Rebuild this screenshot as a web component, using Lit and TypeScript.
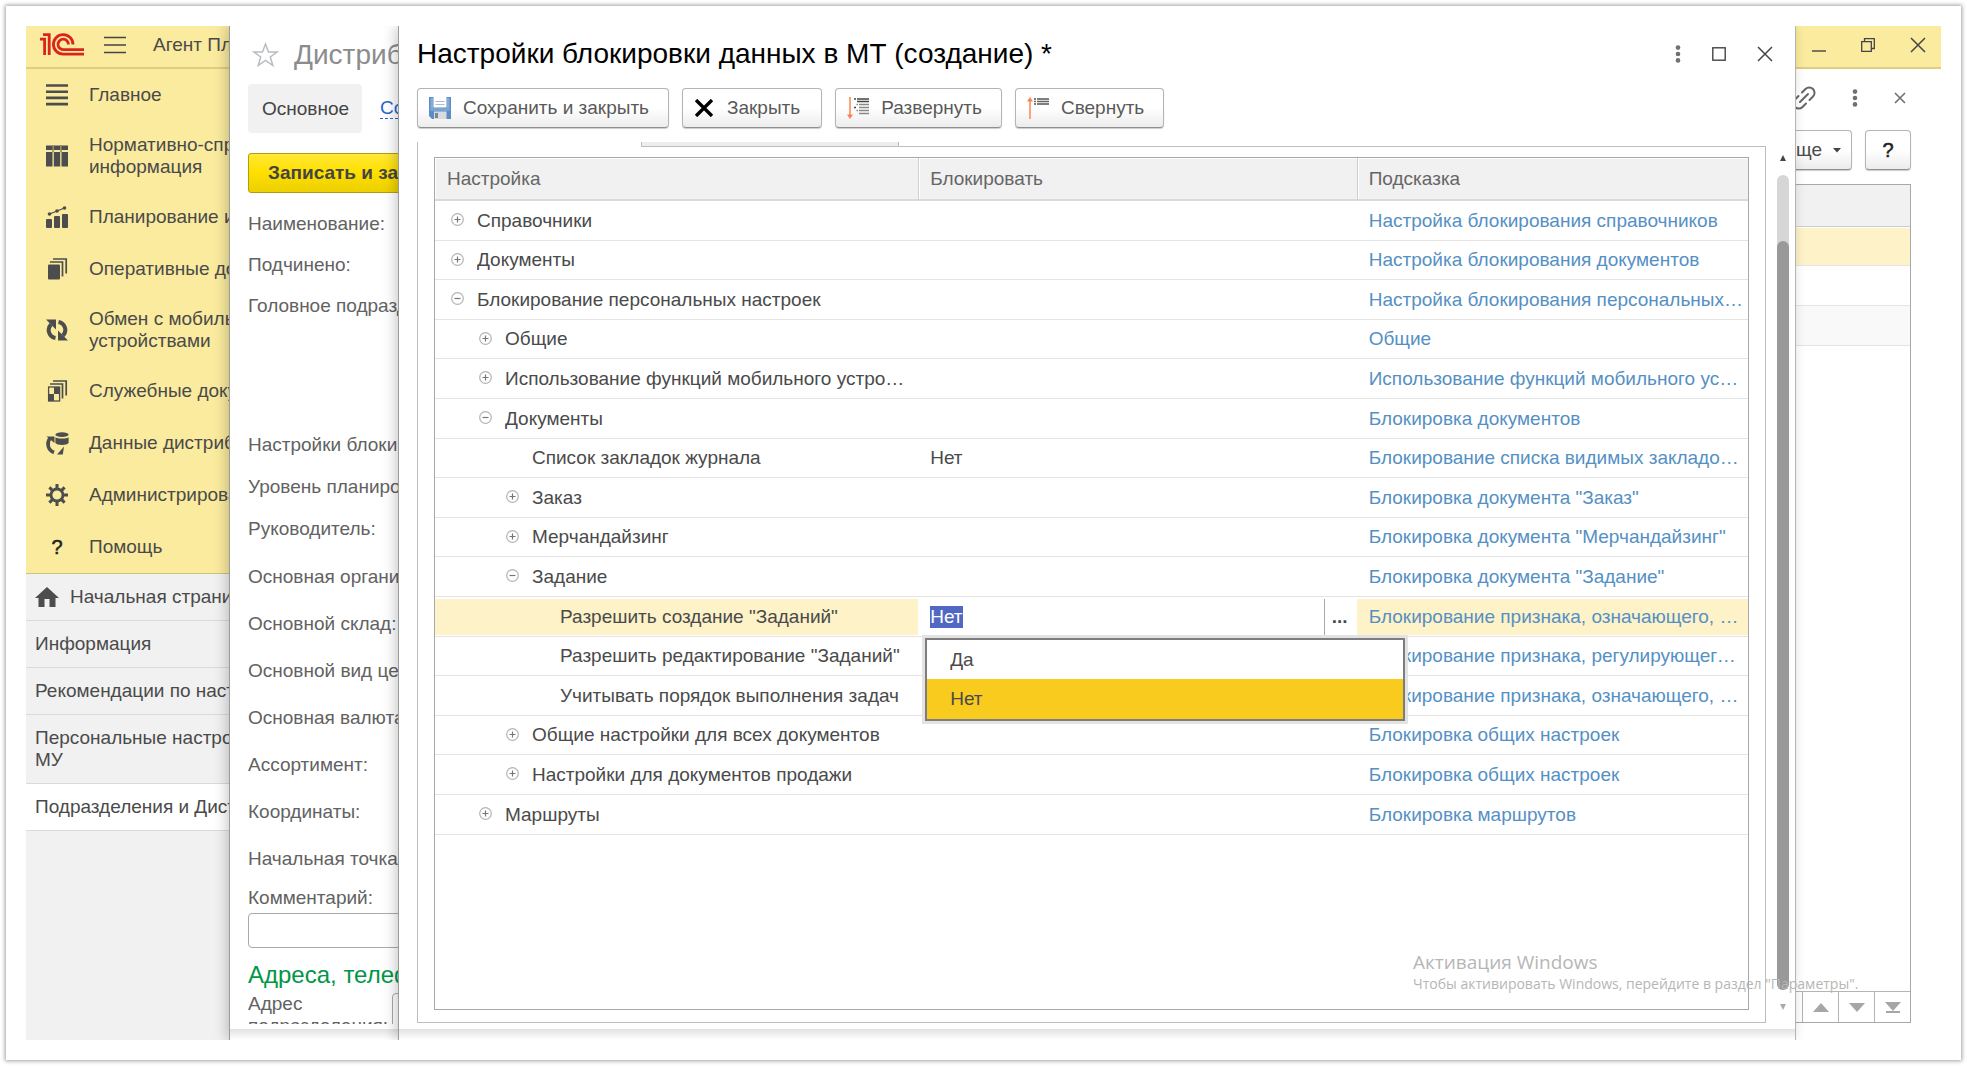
import { LitElement, html, css, svg, nothing } from "lit";
import { customElement, query, state } from "lit/decorators.js";
import { classMap } from "lit/directives/class-map.js";

interface Row {
  level: number;
  mark?: "+" | "-";
  name: string;
  value?: string;
  hint: string;
  editing?: boolean;
}

const ROWS: Row[] = [
  { level: 0, mark: "+", name: "Справочники", hint: "Настройка блокирования справочников" },
  { level: 0, mark: "+", name: "Документы", hint: "Настройка блокирования документов" },
  { level: 0, mark: "-", name: "Блокирование персональных настроек", hint: "Настройка блокирования персональных настроек" },
  { level: 1, mark: "+", name: "Общие", hint: "Общие" },
  { level: 1, mark: "+", name: "Использование функций мобильного устройства", hint: "Использование функций мобильного устройства" },
  { level: 1, mark: "-", name: "Документы", hint: "Блокировка документов" },
  { level: 2, name: "Список закладок журнала", value: "Нет", hint: "Блокирование списка видимых закладок журнала" },
  { level: 2, mark: "+", name: "Заказ", hint: 'Блокировка документа "Заказ"' },
  { level: 2, mark: "+", name: "Мерчандайзинг", hint: 'Блокировка документа "Мерчандайзинг"' },
  { level: 2, mark: "-", name: "Задание", hint: 'Блокировка документа "Задание"' },
  { level: 3, name: 'Разрешить создание "Заданий"', editing: true, hint: "Блокирование признака, означающего, разрешение" },
  { level: 3, name: 'Разрешить редактирование "Заданий"', hint: "Блокирование признака, регулирующего разрешение" },
  { level: 3, name: "Учитывать порядок выполнения задач", hint: "Блокирование признака, означающего, порядок" },
  { level: 2, mark: "+", name: "Общие настройки для всех документов", hint: "Блокировка общих настроек" },
  { level: 2, mark: "+", name: "Настройки для документов продажи", hint: "Блокировка общих настроек" },
  { level: 1, mark: "+", name: "Маршруты", hint: "Блокировка маршрутов" },
];

const icon = (w: number, h: number, body: unknown) =>
  html`<svg width=${w} height=${h} viewBox="0 0 ${w} ${h}" fill="none" aria-hidden="true">${body}</svg>`;

const logo = icon(44, 23, svg`<g stroke="#d9251d" stroke-width="2.8">
  <path d="M0 6.2H4.6V22"/><path d="M3 1.6H9.2V22"/>
  <path d="M33 11.5A9.8 9.8 0 1 0 23.2 21.2H44"/><path d="M28.4 11.5A5.2 5.2 0 1 0 23.2 16.6H44"/></g>`);

const dots = icon(6, 18, svg`<g fill="#707070"><circle cx="3" cy="2.6" r="2.3"/><circle cx="3" cy="9" r="2.3"/><circle cx="3" cy="15.4" r="2.3"/></g>`);
const cross = (s: number, w: number, color = "#444") =>
  icon(s, s, svg`<path d="M1 1L${s - 1} ${s - 1}M${s - 1} 1L1 ${s - 1}" stroke=${color} stroke-width=${w}/>`);

const G = "#4d4d4d";
const MENU: { label: unknown; art: unknown }[] = [
  { label: "Главное", art: icon(22, 22, svg`<path d="M0 1.5H22M0 7.7H22M0 13.9H22M0 20.1H22" stroke=${G} stroke-width="2.6"/>`) },
  { label: html`Нормативно-справочная<br>информация`, art: icon(22, 22, svg`<g fill=${G}><path d="M0 .5H6.5V5H0zM7.8.5H14.2V5H7.8zM15.5.5H22V5H15.5zM0 7H6.5V21.5H0zM7.8 7H14.2V21.5H7.8zM15.5 7H22V21.5H15.5z"/><path d="M6 0H8V7H6zM14 0H16V7H14z" opacity=".5"/></g>`) },
  { label: "Планирование и анализ", art: icon(22, 22, svg`<g fill=${G}><rect y="13" width="6" height="9" rx="1"/><rect x="8" y="10" width="6" height="12" rx="1"/><rect x="16" y="8" width="6" height="14" rx="1"/><circle cx="3.5" cy="8" r="1.8"/><circle cx="11" cy="5" r="1.8"/><circle cx="18.5" cy="2" r="1.8"/></g><path d="M3.5 8L11 5L18.5 2" stroke=${G} stroke-width="1.3"/>`) },
  { label: "Оперативные документы", art: icon(22, 22, svg`<rect x="2" y="6.5" width="12" height="15" rx="1" fill=${G}/><path d="M4 4H16.5V18.5M7 1H20.2V15.5" stroke=${G} stroke-width="1.7"/>`) },
  { label: html`Обмен с мобильными<br>устройствами`, art: icon(22, 22, svg`<path d="M9.5 19A8 8 0 0 1 5 5.5M12.5 3A8 8 0 0 1 17 16.5" stroke=${G} stroke-width="4"/><path d="M0 .5H10V10.5zM22 21.5H12V11.5z" fill=${G}/>`) },
  { label: "Служебные документы", art: icon(22, 22, svg`<rect x="2.6" y="7" width="11" height="14" stroke=${G} stroke-width="1.3"/><path d="M8 7H14V14H8zM2.5 14H8V21H2.5z" fill=${G}/><path d="M4 4H16.5V18.5M7 1H20.2V15.5" stroke=${G} stroke-width="1.7"/>`) },
  { label: "Данные дистрибьютора", art: icon(24, 24, svg`<path d="M9 21.5C2.5 19 1.5 12 5 7" stroke=${G} stroke-width="3.6"/><path d="M1.5 5.5H9.5V12z" fill=${G}/><ellipse cx="17" cy="3.6" rx="6.6" ry="2.4" fill=${G}/><path d="M10.4 6.2C12 8 22 8 23.6 6.2V12C22 14.6 12 14.6 10.4 12zM12 23.5L19 15.5L17.8 23.5z" fill=${G}/>`) },
  { label: "Администрирование", art: icon(22, 22, svg`<circle cx="11" cy="11" r="6" stroke=${G} stroke-width="2.8"/><path d="M11 0V5M11 17V22M0 11H5M17 11H22M3.4 3.4L6.6 6.6M15.4 15.4L18.6 18.6M18.6 3.4L15.4 6.6M3.4 18.6L6.6 15.4" stroke=${G} stroke-width="3"/>`) },
  { label: "Помощь", art: html`<span class="q">?</span>` },
];

const HOME = icon(24, 20, svg`<path d="M12 0L24 11H20.5V20H14.5V12H9.5V20H3.5V11H0z" fill=${G}/>`);

const FLOPPY = icon(22, 22, svg`<path d="M0 0H22V22H3L0 19z" fill="#5b8cc4"/><path d="M1.5 1H4V13H1.5zM18 1H20.5V13H18z" fill="#86add9"/><path d="M1.5 11H20.5V14H1.5z" fill="#79a3d3"/><rect x="4.5" y="0" width="13" height="10.5" fill="#fff"/><path d="M6.5 4.5H15.5M6.5 7.5H15.5" stroke="#a9bdd6" stroke-width="1.2"/><rect x="5" y="14.5" width="12.5" height="7.5" fill="#d9dcdf"/><rect x="6" y="16" width="3" height="5" fill="#7a8694"/>`);
const CLOSE_X = icon(20, 18, svg`<path d="M2 1L18 17M18 1L2 17" stroke="#000" stroke-width="3.4"/>`);
const EXPAND = icon(22, 22, svg`<path d="M3 0V18" stroke="#fb9a70" stroke-width="1.8"/><path d="M0 17.5H6L3 22z" fill="#f9824e"/><path d="M7 2H9M10 2H22M10 4.6H22M7 10.6H9" stroke="#444" stroke-width="1.5"/><path d="M9.5 7.5H11M12 7.5H22M12 10.5H22M9.5 13.5H11M12 13.5H22M12 16.5H22" stroke="#888" stroke-width="1.4"/>`);
const COLLAPSE = icon(22, 22, svg`<path d="M3 4V22" stroke="#fb9a70" stroke-width="1.8"/><path d="M0 4.5H6L3 0z" fill="#f9824e"/><path d="M7 2H9M10 2H22M7 7H9M10 7H22" stroke="#555" stroke-width="1.6"/><path d="M7 4.5H9M10 4.5H22" stroke="#666" stroke-width="1.4"/>`);

const MARK = (m: "+" | "-") =>
  icon(13, 13, svg`<circle cx="6.5" cy="6.5" r="5.8" stroke="#b4b4b4" stroke-width="1.2"/><path d=${m === "+" ? "M3.5 6.5H9.5M6.5 3.5V9.5" : "M3.5 6.5H9.5"} stroke="#777" stroke-width="1.2"/>`);

@customElement("app-root")
export class AppRoot extends LitElement {
  @state() private value = "Нет";
  @query(".editor input") private field!: HTMLInputElement;

  protected firstUpdated() {
    this.field.focus();
    this.field.select();
  }

  private pick(v: string) {
    this.value = v;
  }

  static styles = css`
    :host {
      display: flex;
      box-sizing: border-box;
      min-height: 100vh;
      padding: 6px;
      background: #fff;
      color: #4a4a4a;
      font: 19px/22px "Liberation Sans", Arial, sans-serif;
    }
    * { box-sizing: border-box; }
    svg { display: block; flex: none; }
    button, input { font: inherit; color: inherit; }
    button { padding: 0; background: none; border: 0; }
    h1, h2, h3, ul { margin: 0; padding: 0; font-weight: normal; list-style: none; }
    a { color: inherit; text-decoration: none; }
    .card { flex: 1; display: flex; padding: 20px; background: #fff; box-shadow: 0 0 4px 1px rgba(0, 0, 0, 0.38); }
    .app { flex: 1; min-width: 0; display: flex; flex-direction: column; position: relative; overflow: hidden; }

    .topbar { display: flex; align-items: center; height: 43px; padding: 0 15px 4px 14px; background: #faeb9e; border-bottom: 2px solid #dccf80; }
    .burger { margin-left: 20px; }
    .appname { margin-left: 27px; }
    .sys { margin-left: auto; display: flex; align-items: center; gap: 35px; }
    .body { flex: 1; display: flex; min-height: 0; }
    .side { width: 203px; display: flex; flex-direction: column; background: #f1f1f1; white-space: nowrap; overflow: hidden; }
    .menu { background: #faeb9e; border-bottom: 1px solid #cfc37c; }
    .menu a { display: flex; align-items: center; min-height: 52px; padding: 13px 0 13px 20px; }
    .menu .ico { width: 22px; margin-right: 21px; display: flex; justify-content: center; }
    .q { color: #222; font-size: 20px; -webkit-text-stroke: 0.5px #222; }
    .open a { display: flex; align-items: center; gap: 11px; padding: 12px 10px 12px 9px; border-bottom: 1px solid #dadada; }
    .open a.on { background: #fff; }

    .main { flex: 1; display: flex; flex-direction: column; padding: 0 30px 17px 0; }
    .tools { display: flex; justify-content: flex-end; align-items: center; height: 57px; padding-right: 5px; gap: 36px; }
    .cmds { display: flex; justify-content: flex-end; gap: 13px; margin-top: 4px; }
    .btn { display: flex; align-items: center; height: 40px; border: 1px solid #b4b4b4; border-bottom-color: #8f8f8f; border-radius: 4px; background: linear-gradient(#fff 50%, #ececec); box-shadow: 0 1px 1px rgba(0, 0, 0, 0.2); }
    .more { gap: 11px; padding: 0 10px; }
    .help { width: 46px; justify-content: center; }
    .list { flex: 1; display: flex; flex-direction: column; margin-top: 14px; border: 1px solid #a8a8a8; }
    .list .h { height: 42px; background: #f1f1f1; border-bottom: 1px solid #ccc; }
    .list .r { height: 40px; border-bottom: 1px solid #e4e4e4; }
    .list .cur { height: 39px; background: #fdf2c8; border-top: 1px solid #fff; }
    .list .alt { background: #f9f9f9; }
    .pager { margin-top: auto; display: flex; justify-content: flex-end; border-top: 1px solid #b4b4b4; }
    .pager button { width: 36px; height: 30px; display: flex; align-items: center; justify-content: center; border-left: 1px solid #b4b4b4; }

    .win { position: absolute; top: 0; bottom: 0; display: flex; flex-direction: column; background: #fff; border-left: 1px solid #9b9b9b; box-shadow: -3px 0 12px rgba(0, 0, 0, 0.2); overflow: hidden; }
    .edge { flex: none; height: 11px; background: linear-gradient(#e2e2e2, #fff); }
    .unit { left: 203px; right: 200px; padding-left: 18px; white-space: nowrap; color: #626262; }
    .unit .edge { margin-left: -18px; }
    .unit .content { flex: 1; min-height: 0; overflow: hidden; margin-bottom: 5px; }
    .head { flex: none; display: flex; align-items: center; height: 58px; }
    h1, h2 { font-size: 28px; line-height: 34px; }
    h2 { color: #8c8c8c; margin-left: 15px; }
    .head .star { margin-left: 4px; }
    .tabs { display: flex; align-items: center; gap: 18px; }
    .tabs .on { padding: 14px 13px 13px 14px; background: #f1f1f1; border-radius: 4px; color: #444; }
    .tabs .lnk { color: #2a66c8; border-bottom: 1px dashed #2a66c8; line-height: 20px; }
    .primary { display: flex; align-items: center; margin-top: 20px; height: 40px; padding: 0 19px; border: 1px solid #b39c12; border-radius: 3px; background: linear-gradient(#ffe838, #ffe000 45%, #ecd000); color: #444; font-weight: bold; }
    .g1 { margin-top: 10px; }
    .g1 label, .g2 label, .g3 label { display: flex; align-items: center; height: 41px; }
    .g2 { margin-top: 98px; }
    .g2 label { height: 42px; }
    .g3 { margin-top: 3px; }
    .g3 label { height: 47px; }
    .cmt { display: block; margin-top: 5px; }
    .text { display: block; width: 800px; height: 35px; margin-top: 4px; border: 1px solid #aaa; border-radius: 4px; }
    h3 { margin-top: 13px; font-size: 24px; line-height: 28px; color: #009646; }
    .addr { display: flex; margin-top: 4px; line-height: 22px; }
    .addr label { width: 144px; }
    .addr input { height: 40px; border: 1px solid #aaa; border-radius: 4px; }

    .dlg { left: 372px; right: 145px; border-right: 1px solid #b4b4b4; }
    .dlg .head { padding: 0 22px 2px 18px; color: #000; }
    .ctl { margin-left: auto; display: flex; align-items: center; gap: 31px; }
    .bar { display: flex; gap: 13px; padding: 4px 18px 14px; color: #595959; }
    .bar .btn { padding: 0 19px 0 11px; gap: 12px; }
    .bar .btn.wide { gap: 13px; padding-right: 21px; }
    .work { flex: 1; min-height: 0; display: flex; padding: 0 6px 6px 18px; }
    .group { flex: 1; min-width: 0; display: flex; flex-direction: column; }
    .strip { display: flex; height: 5px; border-left: 1px solid #bdbdbd; }
    .strip .gap { width: 223px; }
    .strip .tab { width: 258px; background: #ededed; border: 1px solid #bdbdbd; border-top: 0; }
    .strip .rest { flex: 1; border-bottom: 1px solid #bdbdbd; }
    .box { flex: 1; display: flex; padding: 10px 16px 12px 16px; border: 1px solid #bdbdbd; border-top: 0; }
    .grid { flex: 1; min-width: 0; border: 1px solid #a8a8a8; }
    table { width: 100%; table-layout: fixed; border-collapse: separate; border-spacing: 0; }
    .c1 { width: 36.8%; }
    .c2 { width: 33.4%; }
    th { height: 43px; padding: 0 0 0 12px; text-align: left; font-weight: normal; color: #666; background: #f1f1f1; border-bottom: 2px solid #dadada; box-shadow: inset 1px 1px #fff; }
    th + th { border-left: 1px solid #cfcfcf; padding-left: 11px; }
    td { height: 40px; padding: 0 12px; border-bottom: 1px solid #e4e4e4; position: relative; }
    td:last-child { padding-right: 4px; }
    tr:nth-child(5n + 2) td, tr:nth-child(5n + 4) td { height: 39px; }
    .node { display: flex; align-items: center; }
    .l1 { padding-left: 28px; }
    .l2 { padding-left: 55px; }
    .l3 { padding-left: 83px; }
    .mk { width: 13px; margin: 0 13px 2px 4px; flex: none; }
    .cut { display: block; overflow: hidden; text-overflow: ellipsis; white-space: nowrap; }
    .hint { color: #5590c4; }
    tr.sel td { background: #fdf2c8; box-shadow: inset 0 2px #fff, inset 0 -1px #fff; }
    tr.sel td.editor { background: #fff; padding: 0; }
    .ed { display: flex; align-items: center; height: 36px; }
    .ed input { flex: 1; min-width: 0; height: 24px; padding: 0 0 0 12px; border: 0; outline: 0; background: none; caret-color: transparent; }
    .ed input::selection { background: #5068c4; color: #fff; }
    .ed button { width: 33px; height: 36px; padding-right: 2px; border-left: 1px solid #aaa; font-weight: bold; line-height: 30px; }
    .pop { position: absolute; z-index: 2; left: 7px; top: 41px; width: 480px; border: 2px solid #7d7d7d; box-shadow: 0 0 0 3px #e3e3e3; background: #fff; }
    .pop button { display: block; width: 100%; height: 39px; padding-left: 23px; text-align: left; }
    .pop .on button { background: #f9cb1f; height: 40px; }
    .scroll { width: 12px; margin-left: 11px; display: flex; flex-direction: column; align-items: center; padding: 13px 0 13px; }
    .track { flex: 1; width: 12px; margin: 14px 0 14px; border-radius: 6px; background: #d6d6d6; padding-top: 66px; }
    .thumb { height: 100%; border-radius: 6px; background: #999; }

    .mark { position: absolute; z-index: 5; left: 1387px; bottom: 46px; color: #b6b6b6; font-family: "Open Sans", "Noto Sans", sans-serif; pointer-events: none; white-space: nowrap; }
    .mark .a { font-size: 19px; line-height: 24px; }
    .mark .b { font-size: 14px; line-height: 20px; }
  `;

  private label(text: string) {
    return html`<label>${text}</label>`;
  }

  private row(r: Row) {
    return html`<tr class=${classMap({ sel: !!r.editing })}>
      <td><div class="node l${r.level}">
        <span class="mk">${r.mark ? MARK(r.mark) : nothing}</span><span class="cut">${r.name}</span>
      </div></td>
      ${r.editing ? this.editor() : html`<td>${r.value ?? nothing}</td>`}
      <td><a class="cut hint" href="#">${r.hint}</a></td>
    </tr>`;
  }

  private editor() {
    return html`<td class="editor">
      <div class="ed"><input aria-label="Блокировать" .value=${this.value}><button aria-label="Выбрать">...</button></div>
      <ul class="pop" role="listbox">
        ${["Да", "Нет"].map((v) => html`<li class=${v === this.value ? "on" : ""}><button @click=${() => this.pick(v)}>${v}</button></li>`)}
      </ul>
    </td>`;
  }

  render() {
    return html`<div class="card"><div class="app">
      <header class="topbar">
        ${logo}
        <button class="burger" aria-label="Меню">${icon(22, 18, svg`<path d="M0 1.5H22M0 9H22M0 16.5H22" stroke="#444" stroke-width="1.6"/>`)}</button>
        <span class="appname">Агент Плюс</span>
        <div class="sys">
          <button aria-label="Свернуть окно">${icon(14, 14, svg`<path d="M0 13H14" stroke="#444" stroke-width="1.4"/>`)}</button>
          <button aria-label="Восстановить">${icon(14, 14, svg`<path d="M.7 3.7H10.3V13.3H.7zM3.5 3.5V.7H13.3V10.5H10.5" stroke="#444" stroke-width="1.3"/>`)}</button>
          <button aria-label="Закрыть приложение">${cross(16, 1.5)}</button>
        </div>
      </header>
      <div class="body">
        <nav class="side">
          <div class="menu">${MENU.map((m) => html`<a href="#"><span class="ico">${m.art}</span><span>${m.label}</span></a>`)}</div>
          <div class="open">
            <a href="#">${HOME}<span>Начальная страница</span></a>
            <a href="#">Информация</a>
            <a href="#">Рекомендации по настройке</a>
            <a href="#"><span>Персональные настройки<br>МУ</span></a>
            <a href="#" class="on">Подразделения и Дистрибьюторы</a>
          </div>
        </nav>
        <main class="main">
          <div class="tools">
            <button aria-label="Ссылка">${icon(24, 24, svg`<g stroke="#666" stroke-width="2" stroke-linecap="round"><path d="M8 16L16 8"/><path d="M10 6.5L13.5 3A4.9 4.9 0 0 1 21 10.5L17.5 14"/><path d="M6.500 10L3 13.500A4.900 4.900 0 0 0 10.500 21L14 17.500"/></g>`)}</button>
            <button aria-label="Ещё">${dots}</button>
            <button aria-label="Закрыть вкладку">${cross(12, 1.6, "#707070")}</button>
          </div>
          <div class="cmds">
            <button class="btn more">Еще ${icon(8, 5, svg`<path d="M0 0H8L4 4.500z" fill="#444"/>`)}</button>
            <button class="btn help" aria-label="Справка"><span class="q">?</span></button>
          </div>
          <div class="list">
            <div class="h"></div><div class="r cur"></div><div class="r"></div><div class="r alt"></div>
            <div class="pager">
              <button aria-label="В начало"></button>
              <button aria-label="Вверх">${icon(16, 9, svg`<path d="M8 0L16 9H0z" fill="#a6a6a6"/>`)}</button>
              <button aria-label="Вниз">${icon(16, 9, svg`<path d="M0 0H16L8 9z" fill="#a6a6a6"/>`)}</button>
              <button aria-label="В конец">${icon(16, 11, svg`<path d="M0 0H16L8 9zM1 9H15V11H1z" fill="#a6a6a6"/>`)}</button>
            </div>
          </div>
        </main>
      </div>

      <section class="win unit">
        <div class="content">
          <div class="head">
            <span class="star">${icon(27, 26, svg`<path d="M13.500 2L16.500 10H25L18.300 15L20.800 23.500L13.500 18.500L6.200 23.500L8.700 15L2 10H10.500z" stroke="#b9bcc0" stroke-width="1.500"/>`)}</span>
            <h2>Дистрибьютор</h2>
          </div>
          <div class="tabs"><a href="#" class="on">Основное</a><a href="#" class="lnk">Сообщения</a></div>
          <button class="primary">Записать и закрыть</button>
          <div class="g1">${["Наименование:", "Подчинено:", "Головное подразделение:"].map(this.label)}</div>
          <div class="g2">${["Настройки блокировки:", "Уровень планирования:", "Руководитель:"].map(this.label)}</div>
          <div class="g3">${["Основная организация:", "Основной склад:", "Основной вид цен:", "Основная валюта:", "Ассортимент:", "Координаты:", "Начальная точка:"].map(this.label)}</div>
          <label class="cmt" for="comment">Комментарий:</label>
          <input class="text" id="comment">
          <h3>Адреса, телефоны</h3>
          <div class="addr"><label for="addr">Адрес<br>подразделения:</label><input id="addr"></div>
        </div>
        <div class="edge"></div>
      </section>

      <section class="win dlg" role="dialog" aria-labelledby="dt">
        <div class="head">
          <h1 id="dt">Настройки блокировки данных в МТ (создание) *</h1>
          <div class="ctl">
            <button aria-label="Действия">${dots}</button>
            <button aria-label="Развернуть окно">${icon(14, 14, svg`<rect x=".8" y=".8" width="12.400" height="12.400" stroke="#444" stroke-width="1.400"/>`)}</button>
            <button aria-label="Закрыть окно">${cross(16, 1.5)}</button>
          </div>
        </div>
        <div class="bar">
          <button class="btn">${FLOPPY}Сохранить и закрыть</button>
          <button class="btn wide">${CLOSE_X}Закрыть</button>
          <button class="btn">${EXPAND}Развернуть</button>
          <button class="btn">${COLLAPSE}Свернуть</button>
        </div>
        <div class="work">
          <div class="group">
            <div class="strip"><div class="gap"></div><div class="tab"></div><div class="rest"></div></div>
            <div class="box"><div class="grid"><table>
              <colgroup><col class="c1"><col class="c2"><col></colgroup>
              <thead><tr><th>Настройка</th><th>Блокировать</th><th>Подсказка</th></tr></thead>
              <tbody>${ROWS.map((r) => this.row(r))}</tbody>
            </table></div></div>
          </div>
          <div class="scroll">
            ${icon(6, 6, svg`<path d="M3 0L6 6H0z" fill="#444"/>`)}
            <div class="track"><div class="thumb"></div></div>
            ${icon(6, 6, svg`<path d="M0 0H6L3 6z" fill="#aaa"/>`)}
          </div>
        </div>
        <div class="edge"></div>
      </section>

      <div class="mark"><div class="a">Активация Windows</div><div class="b">Чтобы активировать Windows, перейдите в раздел "Параметры".</div></div>
    </div></div>`;
  }
}
